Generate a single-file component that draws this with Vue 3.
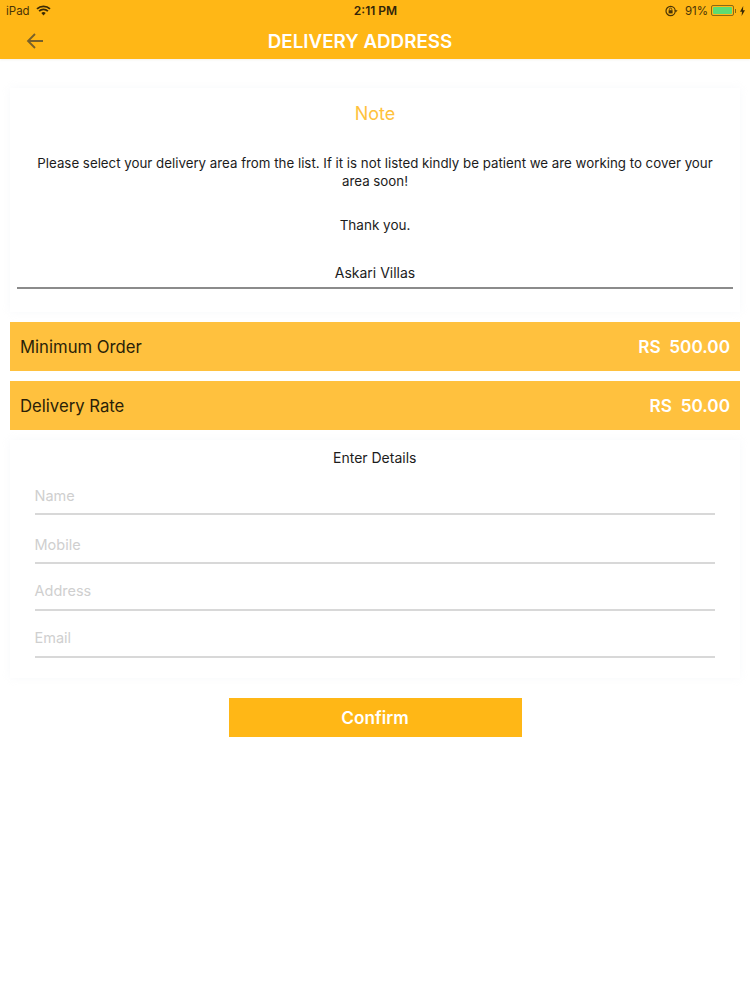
<script setup>
const rows = [
  { label: 'Minimum Order', value: 'RS  500.00' },
  { label: 'Delivery Rate', value: 'RS  50.00' },
]
const fields = [
  { name: 'Name', cls: 'f1' },
  { name: 'Mobile', cls: 'f2' },
  { name: 'Address', cls: 'f3' },
  { name: 'Email', cls: 'f3' },
]
</script>

<template>
  <div class="page">
    <header class="top">
      <div class="status">
        <div class="st-left">
          <span>iPad</span>
          <svg class="wifi" width="15" height="11" viewBox="0 0 15 11">
            <path d="M7.5 10.6 5.3 8.1a3.2 3.2 0 0 1 4.4 0z" fill="#3a2a05"/>
            <path d="M1 3.9a9.4 9.4 0 0 1 13 0M3.1 6.2a6.3 6.3 0 0 1 8.8 0" fill="none" stroke="#3a2a05" stroke-width="1.8"/>
          </svg>
        </div>
        <span class="time">2:11 PM</span>
        <div class="st-right">
          <svg width="13" height="12" viewBox="0 0 13 12">
            <circle cx="5.6" cy="6" r="4.6" fill="none" stroke="#4a3406" stroke-width="1.2"/>
            <rect x="3.6" y="5.2" width="4" height="3.2" fill="#4a3406"/>
            <path d="M4.4 5.2V4.3a1.2 1.2 0 0 1 2.4 0v.9" fill="none" stroke="#4a3406" stroke-width=".8"/>
            <path d="M9.4 5.2h3.2L11 7.2z" fill="#4a3406"/>
          </svg>
          <span class="pct">91%</span>
          <span class="battery"><span class="level"></span></span>
          <span class="nub"></span>
          <svg width="5" height="10" viewBox="0 0 5 10">
            <path d="M3.2 0 0 5.7h2L1.6 10 5 4.2H3z" fill="#3a2a05"/>
          </svg>
        </div>
      </div>
      <div class="nav">
        <svg class="back" width="18" height="16" viewBox="0 0 18 16">
          <path d="M17 8H2M9 1 2 8l7 7" fill="none" stroke="#77602a" stroke-width="1.8"/>
        </svg>
        <h1>DELIVERY ADDRESS</h1>
      </div>
    </header>

    <main class="content">
      <section class="note">
        <h2>Note</h2>
        <p class="msg">Please select your delivery area from the list. If it is not listed kindly be patient we are working to cover your area soon!</p>
        <p class="thanks">Thank you.</p>
        <div class="area">Askari Villas</div>
      </section>

      <div class="rows">
        <div v-for="r in rows" :key="r.label" class="row">
          <span class="label">{{ r.label }}</span>
          <span class="value">{{ r.value }}</span>
        </div>
      </div>

      <section class="details">
        <h3>Enter Details</h3>
        <div v-for="f in fields" :key="f.name" class="field" :class="f.cls">{{ f.name }}</div>
      </section>

      <button class="confirm" type="button">Confirm</button>
    </main>
  </div>
</template>

<style>
html, body { margin: 0; background: #fff; }
</style>

<style scoped>
.page {
  width: 750px;
  height: 1000px;
  background: #fff;
  font-family: "Inter", "Liberation Sans", sans-serif;
  color: #1c1c1c;
  overflow: hidden;
}
.top {
  height: 59px;
  background: #ffb716;
  box-shadow: 0 1px 2px rgba(120, 90, 0, .08);
}
.status {
  height: 21px;
  padding: 0 5px 0 6px;
  display: grid;
  grid-template-columns: 1fr auto 1fr;
  align-items: center;
  font-size: 11.5px;
  color: #4a3406;
}
.st-left { display: flex; align-items: center; gap: 6px; }
.time { font-weight: 600; font-size: 12px; color: #33250a; }
.st-right { display: flex; align-items: center; justify-content: flex-end; }
.pct { margin: 0 3px 0 7px; }
.battery {
  width: 23px;
  height: 11px;
  box-sizing: border-box;
  border: 1px solid #8a6a14;
  border-radius: 2px;
  padding: 1px;
  display: flex;
}
.level { flex: 1; background: #5ddc72; border-radius: 1px; }
.nub { width: 1px; height: 4px; background: #8a6a14; margin: 0 4px 0 1px; }
.nav {
  position: relative;
  height: 38px;
  display: flex;
  align-items: center;
  justify-content: center;
}
.back { position: absolute; left: 26px; top: 12px; }
h1 {
  margin: 2px 30px 0 0;
  font-size: 18.8px;
  font-weight: 600;
  color: #fff;
  letter-spacing: 0;
}
.content {
  padding: 29px 10px 0;
  display: flex;
  flex-direction: column;
}
.note {
  height: 224px;
  box-sizing: border-box;
  padding: 15px 7px 0;
  text-align: center;
  box-shadow: 0 0 8px rgba(232, 236, 242, .3);
}
h2 {
  margin: 0;
  font-size: 18px;
  line-height: 22px;
  font-weight: 400;
  color: #ffc23c;
}
.msg {
  margin: 29px 0 0;
  padding: 0 10px;
  font-size: 13.3px;
  line-height: 18px;
}
.thanks {
  margin: 26px 0 0;
  font-size: 13.5px;
  line-height: 18px;
}
.area {
  margin-top: 25px;
  height: 30px;
  box-sizing: border-box;
  font-size: 14px;
  line-height: 27px;
  border-bottom: 2px solid #8b8b8b;
}
.rows {
  margin-top: 10px;
  display: flex;
  flex-direction: column;
  gap: 10px;
}
.row {
  height: 49px;
  padding: 0 10px;
  background: #ffc13e;
  display: flex;
  align-items: center;
  justify-content: space-between;
}
.label { font-size: 16.7px; color: #2a1f08; }
.value {
  font-size: 17.2px;
  font-weight: 600;
  color: #fff;
  white-space: pre;
}
.details {
  margin-top: 10px;
  height: 238px;
  box-sizing: border-box;
  padding: 9px 25px 0 24.5px;
  box-shadow: 0 0 8px rgba(232, 236, 242, .3);
}
h3 {
  margin: 0 0 1px;
  font-size: 14px;
  line-height: 18px;
  font-weight: 400;
  text-align: center;
}
.field {
  box-sizing: border-box;
  font-size: 14.5px;
  color: #cfcfcf;
  border-bottom: 2px solid #d8d8d8;
}
.f1 { height: 47px; padding-top: 19px; }
.f2 { height: 49px; padding-top: 21px; }
.f3 { height: 47px; padding-top: 18px; }
.confirm {
  align-self: center;
  margin-top: 20px;
  width: 293px;
  height: 39px;
  border: 0;
  padding: 0;
  background: #ffb716;
  color: #fff;
  font-family: inherit;
  font-size: 17.2px;
  font-weight: 600;
}
</style>
